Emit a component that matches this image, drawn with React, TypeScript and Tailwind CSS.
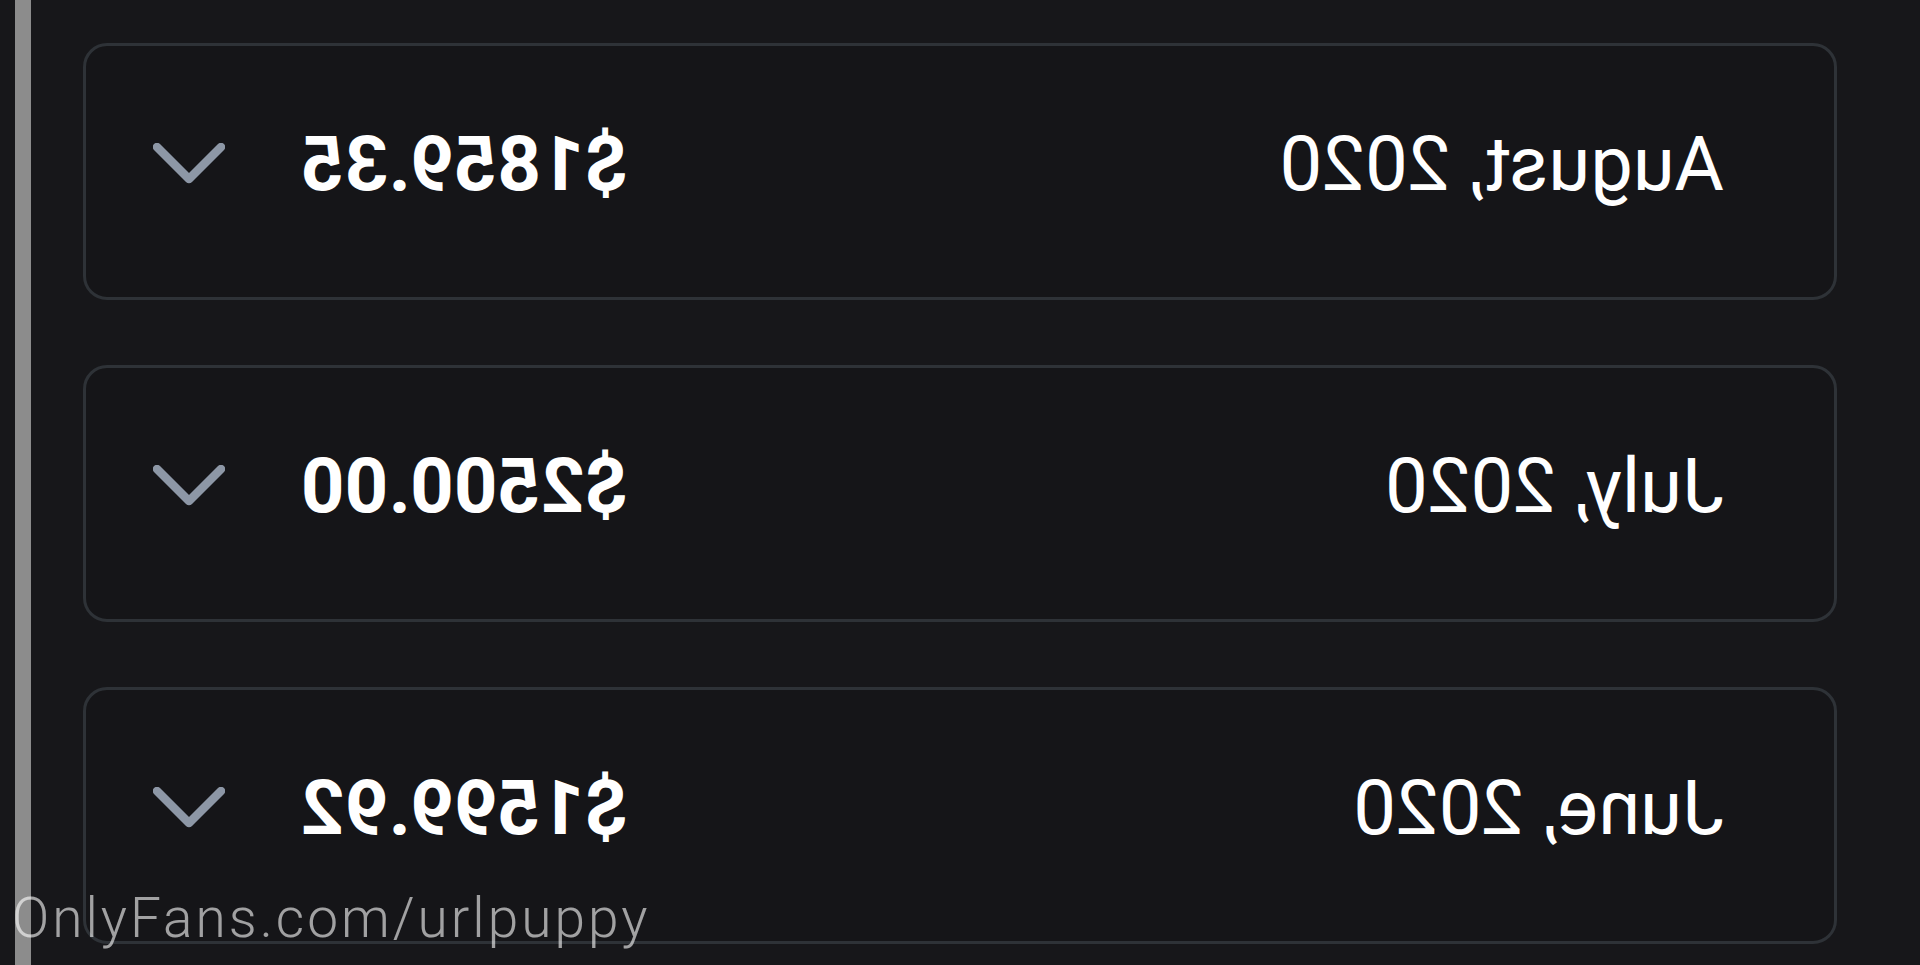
import React from 'react';

type Statement = {
    month: string;
    total: string;
};

const statements: Statement[] = [
    { month: 'August, 2020', total: '$1859.35' },
    { month: 'July, 2020', total: '$2500.00' },
    { month: 'June, 2020', total: '$1599.92' },
];

const Chevron: React.FC = () => (
    <svg width="72" height="42" viewBox="0 0 72 42" fill="none" className="shrink-0">
        <polyline
            points="4,4 36,36 68,4"
            stroke="#8d97a6"
            strokeWidth="8.5"
            strokeLinecap="round"
            strokeLinejoin="round"
        />
    </svg>
);

const StatementRow: React.FC<{ item: Statement }> = ({ item }) => (
    <div className="flex h-[257px] items-center justify-between rounded-[24px] border-[3px] border-[#2e3237] bg-[#151518] pb-[16px] pl-[110px] pr-[67px]">
        <span className="text-[76px] leading-none text-white">{item.month}</span>
        <div className="flex items-center gap-[76px]">
            <span className="text-[76px] font-bold leading-none text-white">{item.total}</span>
            <Chevron />
        </div>
    </div>
);

const App: React.FC = () => {
    return (
        <div className="relative h-[965px] w-full overflow-hidden bg-[#17171a] font-['Roboto','Liberation_Sans',sans-serif]">
            {/* statement list, shown flipped */}
            <div className="flex h-full -scale-x-100">
                <div className="flex flex-1 flex-col gap-[65px] pl-[83px] pr-[52px] pt-[43px]">
                    {statements.map((s) => (
                        <StatementRow key={s.month} item={s} />
                    ))}
                </div>
                <div className="mr-[15px] h-full w-[16px] bg-[#8c8c8c]" />
            </div>
            <span className="absolute left-[12px] top-[891px] text-[55px] font-light leading-none tracking-[3px] text-white/60">
                OnlyFans.com/urlpuppy
            </span>
        </div>
    );
};

export default App;
